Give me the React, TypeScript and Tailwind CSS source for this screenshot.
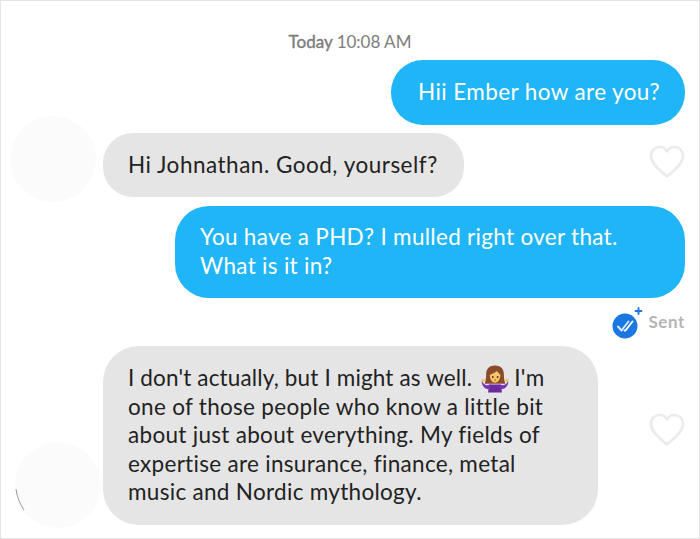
import React from 'react';

const font = { fontFamily: 'Lato, "Open Sans", sans-serif' };

function Heart() {
  return (
    <svg width="36" height="34" viewBox="0 0 36 34" fill="none" className="block">
      <path
        d="M18 31.5 C13 27 2 19.5 2 11 C2 5.5 6 2 10.5 2 C13.8 2 16.6 3.8 18 6.5 C19.4 3.8 22.2 2 25.5 2 C30 2 34 5.5 34 11 C34 19.5 23 27 18 31.5 Z"
        stroke="#ebebeb"
        strokeWidth="2.6"
        strokeLinejoin="round"
      />
    </svg>
  );
}

function ShrugEmoji() {
  return (
    <svg width="28" height="28" viewBox="0 0 30 30" className="inline-block align-[-7px] ml-[9px] mr-[5px]">
      <path d="M15 0.5 C8 0.5 5.5 5 5.5 10 C5.5 14 5 17 4 20 L26 20 C25 17 24.5 14 24.5 10 C24.5 5 22 0.5 15 0.5 Z" fill="#8a4b2c" />
      <path d="M9.5 10.5 C12 9.5 15 8.5 17 6.5 C18.5 8.5 20 9.8 20.8 10.5 C20.8 15.5 18 19 15 19 C12 19 9.3 15.5 9.5 10.5 Z" fill="#f7c66b" />
      <circle cx="12.6" cy="12.8" r="1" fill="#4a2e18" />
      <circle cx="17.8" cy="12.8" r="1" fill="#4a2e18" />
      <ellipse cx="15.2" cy="16" rx="1.2" ry="0.8" fill="#c9563a" />
      <path d="M9 21 L21 21 L22.5 29.5 L7.5 29.5 Z" fill="#6a2ba0" />
      <path d="M1 17 C3 22 6 22.5 10 20.5 L10 25.5 C6 27 2 24 0.8 19 Z" fill="#7b33b5" />
      <path d="M29 17 C27 22 24 22.5 20 20.5 L20 25.5 C24 27 28 24 29.2 19 Z" fill="#7b33b5" />
      <ellipse cx="2.4" cy="16.4" rx="2.2" ry="1.7" fill="#f7c66b" />
      <ellipse cx="27.6" cy="16.4" rx="2.2" ry="1.7" fill="#f7c66b" />
    </svg>
  );
}

function SentBadge() {
  return (
    <svg width="34" height="34" viewBox="0 0 34 34" className="block">
      <circle cx="14" cy="20" r="12.5" fill="#1b78e2" />
      <path d="M7 20.5 L10.5 24.5 L17.5 15.5" fill="none" stroke="#fff" strokeWidth="1.9" strokeLinecap="round" strokeLinejoin="round" opacity="0.85" />
      <path d="M13.5 24.5 L14.5 24.5 L21.5 15.5" fill="none" stroke="#fff" strokeWidth="1.9" strokeLinecap="round" strokeLinejoin="round" />
      <path d="M27.5 2 L27.5 8 M24.5 5 L30.5 5" stroke="#1b78e2" strokeWidth="1.9" strokeLinecap="round" />
    </svg>
  );
}

function Avatar({ mark }: { mark?: boolean }) {
  return (
    <div className="relative w-[86px] h-[86px] rounded-full bg-[#fbfbfb] shrink-0">
      {mark && (
        <svg width="12" height="26" viewBox="0 0 12 26" className="absolute left-0 top-[46px]">
          <path d="M1 1 C2 9 5 16 9 22" fill="none" stroke="#8f8f8f" strokeWidth="0.9" />
        </svg>
      )}
    </div>
  );
}

export default function App() {
  return (
    <div
      className="w-[700px] h-[539px] overflow-hidden bg-white border border-[#e4e4e4] text-[22.5px] leading-[28.5px] tracking-[0.3px] flex flex-col"
      style={font}
    >
      <div className="text-center text-[#7d7d7d] text-[17px] leading-[20px] tracking-normal mt-[31px]">
        <span className="[-webkit-text-stroke:0.4px_#7d7d7d]">Today</span> 10:08 AM
      </div>

      <div className="flex justify-end pr-[14px] mt-[8px]">
        <div className="w-[294px] h-[65px] rounded-[32px] bg-[#1fb5f6] text-white flex items-center pl-[27px] tracking-[0.4px]">
          Hii Ember how are you?
        </div>
      </div>

      <div className="flex items-start mt-[-9px] pl-[9px] pr-[14px]">
        <Avatar />
        <div className="ml-[7px] mt-[17px] w-[361px] h-[64px] rounded-[30px] bg-[#e5e5e5] text-[#222] flex items-center pl-[25px] tracking-[0.5px]">
          Hi Johnathan. Good, yourself?
        </div>
        <div className="ml-auto mt-[29px]">
          <Heart />
        </div>
      </div>

      <div className="flex justify-end pr-[14px] mt-[4px]">
        <div className="w-[510px] h-[92px] rounded-[34px] bg-[#1fb5f6] text-white pl-[25px] pt-[17px]">
          You have a PHD? I mulled right over that.
          <br />
          What is it in?
        </div>
      </div>

      <div className="flex justify-end items-center pr-[14px] mt-[8px]">
        <SentBadge />
        <span className="ml-[3px] mb-[3px] text-[#b5b5b5] text-[17px] font-bold leading-[20px] tracking-[0.6px]">Sent</span>
      </div>

      <div className="flex items-start mt-[6px] pl-[14px] pr-[14px]">
        <div className="mt-[96px]">
          <Avatar mark />
        </div>
        <div className="ml-[2px] w-[495px] h-[179px] rounded-[36px] bg-[#e5e5e5] text-[#222] pl-[25px] pt-[17.5px]">
          <span className="tracking-[0.15px]">I don't actually, but I might as well.</span>
          <ShrugEmoji />
          I'm
          <br />
          one of those people who know a little bit
          <br />
          about just about everything. My fields of
          <br />
          expertise are insurance, finance, metal
          <br />
          music and Nordic mythology.
        </div>
        <div className="ml-auto mt-[67px]">
          <Heart />
        </div>
      </div>
    </div>
  );
}
